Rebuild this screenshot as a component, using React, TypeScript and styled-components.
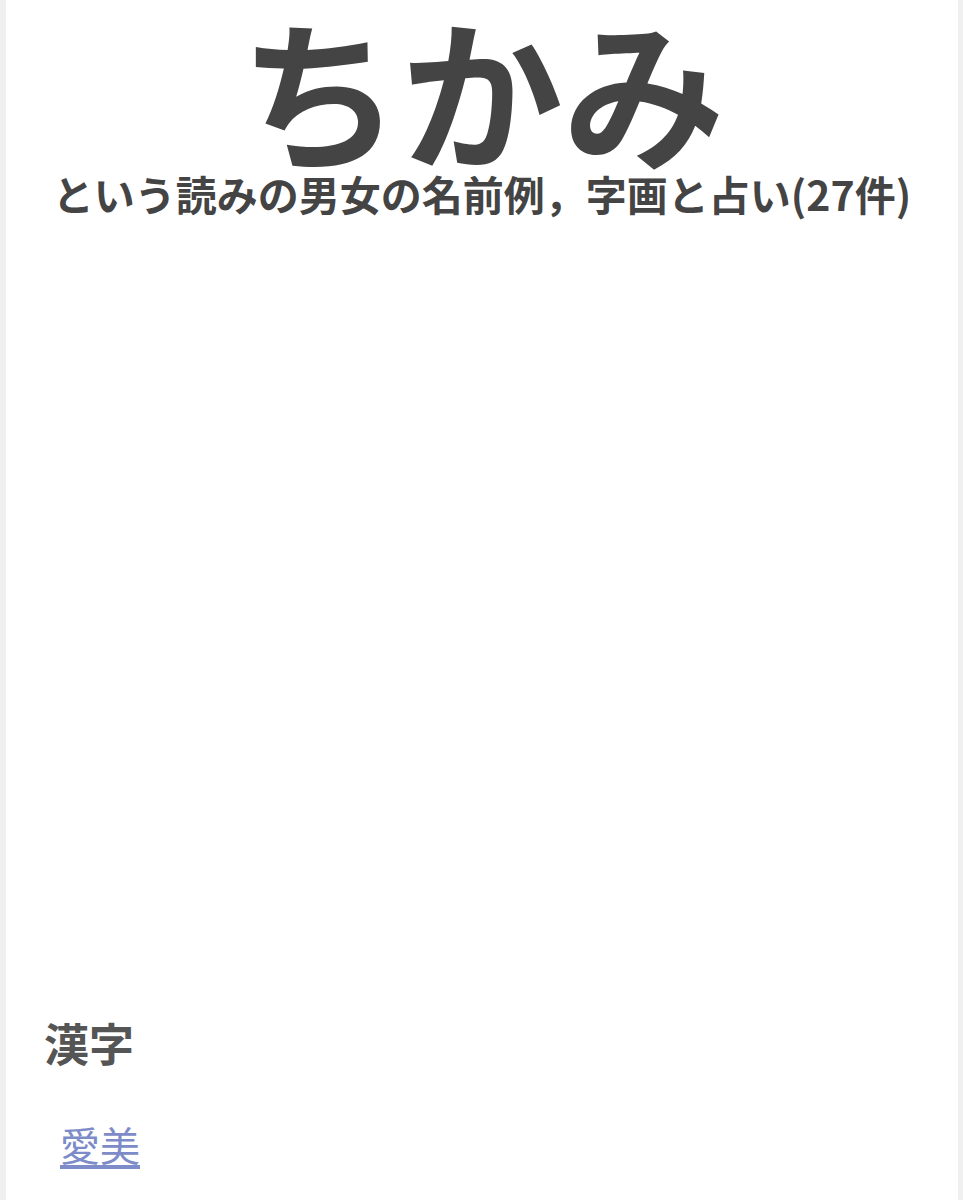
import React from 'react';
import styled, { createGlobalStyle } from 'styled-components';

const GlobalStyle = createGlobalStyle`
  html, body {
    margin: 0;
    padding: 0;
    background: #f0f0f0;
    font-family: "Noto Sans CJK JP", "Noto Sans", sans-serif;
  }
`;

const Page = styled.div`
  margin: 0 5px 0 6px;
  background: #ffffff;
  min-height: 1200px;
  color: #444444;
`;

const Header = styled.header`
  display: flex;
  flex-direction: column;
  align-items: center;
  padding-top: 3px;
`;

const Reading = styled.h1`
  margin: 0;
  font-size: 162px;
  font-weight: 700;
  line-height: 169px;
  color: #444444;
`;

const Subtitle = styled.h2`
  margin: 0;
  font-size: 41px;
  font-weight: 700;
  line-height: 42px;
  color: #444444;
`;

const AdSpace = styled.div`
  height: 797px;
`;

const Section = styled.section`
  padding: 0 38px;
`;

const SectionTitle = styled.h3`
  margin: 0;
  font-size: 45px;
  font-weight: 700;
  line-height: 64px;
  color: #555555;
`;

const NameList = styled.ul`
  list-style: none;
  margin: 41px 0 0;
  padding: 0 0 0 16px;
`;

const NameLink = styled.a`
  font-size: 40px;
  font-weight: 400;
  line-height: 56px;
  color: #7d8cc8;
  text-decoration: underline;
  text-underline-offset: 4px;
`;

export default function App() {
  return (
    <>
      <GlobalStyle />
      <Page>
        <Header>
          <Reading>ちかみ</Reading>
          <Subtitle>という読みの男女の名前例，字画と占い(27件)</Subtitle>
        </Header>
        <AdSpace />
        <Section>
          <SectionTitle>漢字</SectionTitle>
          <NameList>
            <li>
              <NameLink href="#">愛美</NameLink>
            </li>
          </NameList>
        </Section>
      </Page>
    </>
  );
}
